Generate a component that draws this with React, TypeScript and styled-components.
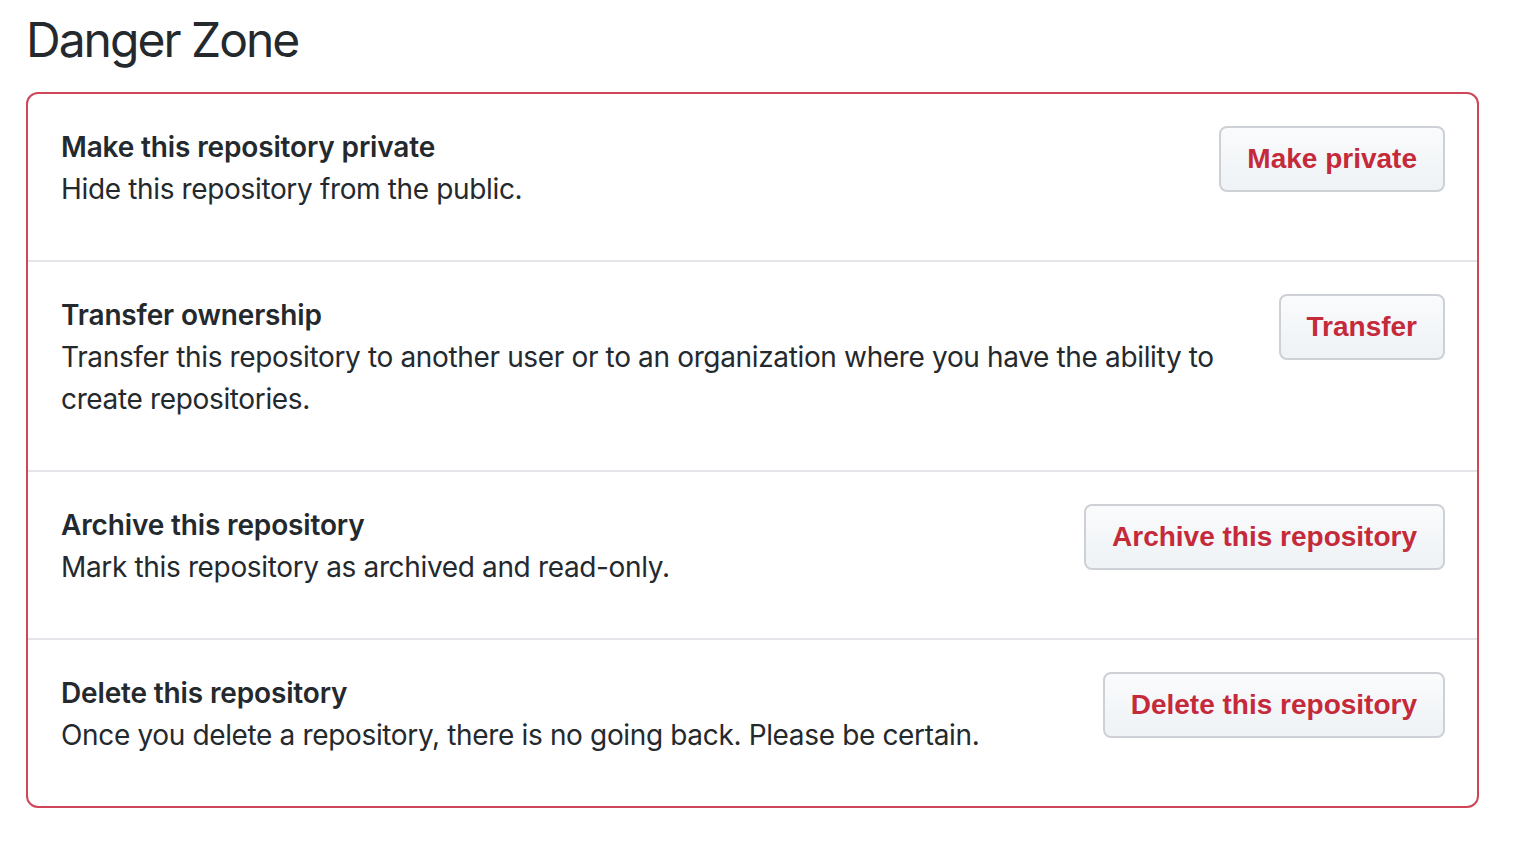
import styled, { createGlobalStyle } from "styled-components";

const GlobalStyle = createGlobalStyle`
  html, body {
    margin: 0;
    padding: 0;
    background: #ffffff;
  }
  body {
    font-family: Inter, "Liberation Sans", sans-serif;
    color: #24292e;
  }
`;

const Page = styled.div`
  width: 1453px;
  margin-left: 26px;
`;

const Heading = styled.h2`
  margin: 10px 0 22px 0;
  font-size: 48px;
  line-height: 60px;
  font-weight: 400;
  letter-spacing: -2px;
  color: #24292e;
`;

const DangerBox = styled.div`
  border: 2px solid #cf4659;
  border-radius: 12px;
  background: #ffffff;
`;

const Row = styled.div`
  display: flex;
  align-items: flex-start;
  justify-content: space-between;
  gap: 40px;
  padding: 32px 32px 32px 33px;
  & + & {
    border-top: 2px solid #e3e5e8;
  }
`;

const Info = styled.div`
  flex: 1;
  font-size: 28px;
  line-height: 42px;
`;

const Title = styled.strong`
  display: block;
  font-weight: 600;
  letter-spacing: -0.15px;
`;

const Desc = styled.p`
  margin: 0 0 18px;
  font-weight: 400;
  letter-spacing: -0.35px;
`;

const DangerButton = styled.button`
  flex: none;
  padding: 11px 26px;
  border: 2px solid #cdd0d4;
  border-radius: 8px;
  background-image: linear-gradient(-180deg, #fafbfc 0%, #eff3f6 90%);
  color: #c52a3a;
  font-family: "Liberation Sans", Arial, sans-serif;
  font-size: 28px;
  font-weight: 700;
  line-height: 40px;
  white-space: nowrap;
  cursor: pointer;
`;

const items = [
  {
    title: "Make this repository private",
    desc: "Hide this repository from the public.",
    action: "Make private",
  },
  {
    title: "Transfer ownership",
    desc: "Transfer this repository to another user or to an organization where you have the ability to create repositories.",
    action: "Transfer",
  },
  {
    title: "Archive this repository",
    desc: "Mark this repository as archived and read-only.",
    action: "Archive this repository",
  },
  {
    title: "Delete this repository",
    desc: "Once you delete a repository, there is no going back. Please be certain.",
    action: "Delete this repository",
  },
];

const App = () => {
  return (
    <>
      <GlobalStyle />
      <Page>
        <Heading>Danger Zone</Heading>
        <DangerBox>
          {items.map((item) => (
            <Row key={item.title}>
              <Info>
                <Title>{item.title}</Title>
                <Desc>{item.desc}</Desc>
              </Info>
              <DangerButton type="button">{item.action}</DangerButton>
            </Row>
          ))}
        </DangerBox>
      </Page>
    </>
  );
};

export default App;
